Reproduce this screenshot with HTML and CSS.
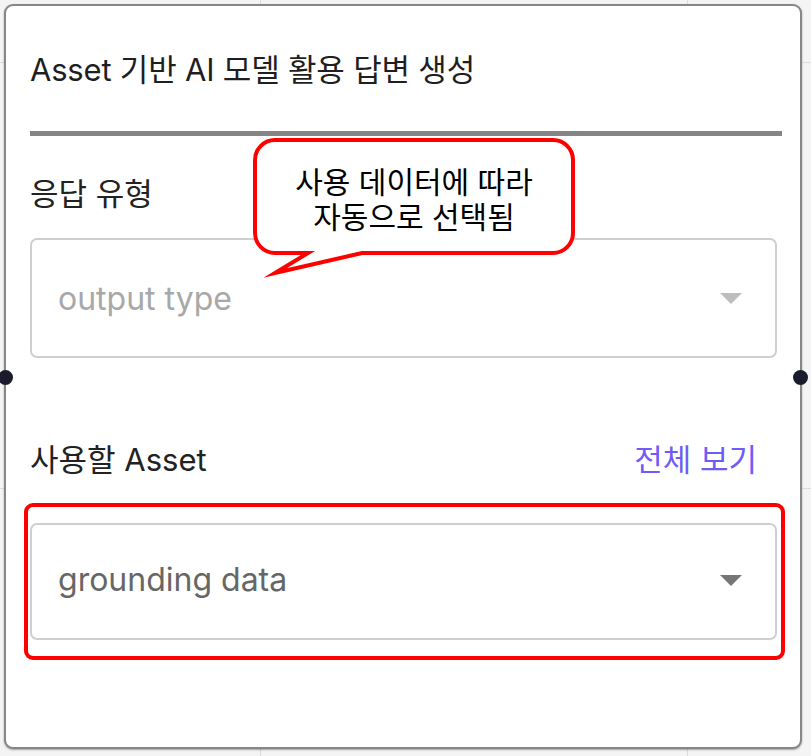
FILE: index.html
```html
<!DOCTYPE html>
<html lang="ko">
<head>
<meta charset="utf-8">
<title>Asset 기반 AI 모델 활용 답변 생성</title>
<link rel="stylesheet" href="styles.css">
</head>
<body>
<div class="canvas">
  <div class="node">
    <span class="handle handle-left"></span>
    <span class="handle handle-right"></span>

    <header class="node-head">
      <h1 class="node-title">Asset 기반 AI 모델 활용 답변 생성</h1>
    </header>
    <div class="divider"></div>

    <section class="field field-type">
      <div class="field-label">응답 유형</div>
      <div class="select select-placeholder">
        <span class="select-value">output type</span>
        <svg class="caret" width="22" height="11" viewBox="0 0 22 11"><path d="M0 0H22L11 11Z"/></svg>
      </div>
    </section>

    <section class="field field-asset">
      <div class="field-row">
        <span class="field-label">사용할 Asset</span>
        <a class="field-link">전체 보기</a>
      </div>
      <div class="select-wrap">
        <div class="select select-filled">
          <span class="select-value">grounding data</span>
          <svg class="caret" width="22" height="11" viewBox="0 0 22 11"><path d="M0 0H22L11 11Z"/></svg>
        </div>
        <div class="highlight"></div>
      </div>
    </section>

    <div class="callout">
      <svg class="callout-shape" width="330" height="145" viewBox="0 0 330 145">
        <path d="M25 5H303A20 20 0 0 1 323 25V98A20 20 0 0 1 303 118H112L25 138L58 118H25A20 20 0 0 1 5 98V25A20 20 0 0 1 25 5Z"/>
      </svg>
      <div class="callout-text">사용 데이터에 따라<br>자동으로 선택됨</div>
    </div>
  </div>
</div>
</body>
</html>
```

FILE: styles.css
```css
html, body {
  margin: 0;
  padding: 0;
}

body {
  width: 811px;
  height: 756px;
  overflow: hidden;
  background:
    linear-gradient(#dcdcdc, #dcdcdc) 260px 0 / 1px 100% no-repeat,
    linear-gradient(#dcdcdc, #dcdcdc) 687px 0 / 1px 100% no-repeat,
    linear-gradient(#dcdcdc, #dcdcdc) 0 62px / 100% 1px no-repeat,
    linear-gradient(#dcdcdc, #dcdcdc) 0 488px / 100% 1px no-repeat,
    #f4f4f4;
  font-family: Inter, "Noto Sans CJK KR", sans-serif;
  color: #1f1f1f;
}

.canvas {
  padding: 4px;
}

.node {
  position: relative;
  box-sizing: border-box;
  width: 798px;
  height: 745px;
  padding: 0 18px 0 24px;
  background: #fff;
  border: 2px solid #878787;
  border-radius: 9px;
  box-shadow: 0 1px 2px rgba(0, 0, 0, 0.35);
}

.handle {
  position: absolute;
  top: 364px;
  width: 15px;
  height: 15px;
  border-radius: 50%;
  background: #1b1b2e;
}

.handle-left { left: -8px; }
.handle-right { right: -8px; }

.node-head {
  padding-top: 47px;
}

.node-title {
  margin: 0;
  font-size: 31px;
  line-height: 34px;
  font-weight: 400;
  color: #1f1f1f;
  letter-spacing: -0.2px;
}

.divider {
  margin-top: 44px;
  height: 5px;
  background: #858585;
}

.field-label {
  font-size: 31px;
  line-height: 34px;
  color: #222;
}

.field-type .field-label {
  margin-top: 41px;
}

.select {
  box-sizing: border-box;
  display: flex;
  align-items: center;
  justify-content: space-between;
  margin-right: 5px;
  padding: 0 33px 0 26px;
  border: 2px solid #cfcfcf;
  border-radius: 7px;
  background: #fff;
  font-size: 32px;
}

.field-type .select {
  margin-top: 27px;
  height: 120px;
}

.select-placeholder .select-value { color: #a8a8a8; }
.select-placeholder .caret { fill: #bdbdbd; }

.select-filled {
  height: 117px;
  padding-bottom: 5px;
}
.select-filled .select-value { color: #666; }
.select-filled .caret { fill: #767676; margin-top: 3px; }

.field-asset {
  margin-top: 85px;
}

.field-row {
  display: flex;
  justify-content: space-between;
  align-items: center;
  padding-right: 25px;
}

.field-link {
  font-size: 31px;
  line-height: 34px;
  color: #6f5cf6;
  cursor: pointer;
}

.select-wrap {
  position: relative;
  margin-top: 46px;
}

.highlight {
  position: absolute;
  top: -20px;
  bottom: -20px;
  left: -6px;
  right: -3px;
  border: 4px solid #ff0000;
  border-radius: 9px;
}

.callout {
  position: absolute;
  left: 244px;
  top: 129px;
  width: 330px;
  height: 145px;
}

.callout-shape {
  display: block;
}

.callout-shape path {
  fill: #fff;
  stroke: #ff0000;
  stroke-width: 4;
  stroke-miterlimit: 10;
}

.callout-text {
  position: absolute;
  top: 28px;
  left: 0;
  right: 2px;
  text-align: center;
  font-family: "Noto Sans CJK KR", sans-serif;
  font-size: 30px;
  line-height: 35px;
  color: #000;
}
```
